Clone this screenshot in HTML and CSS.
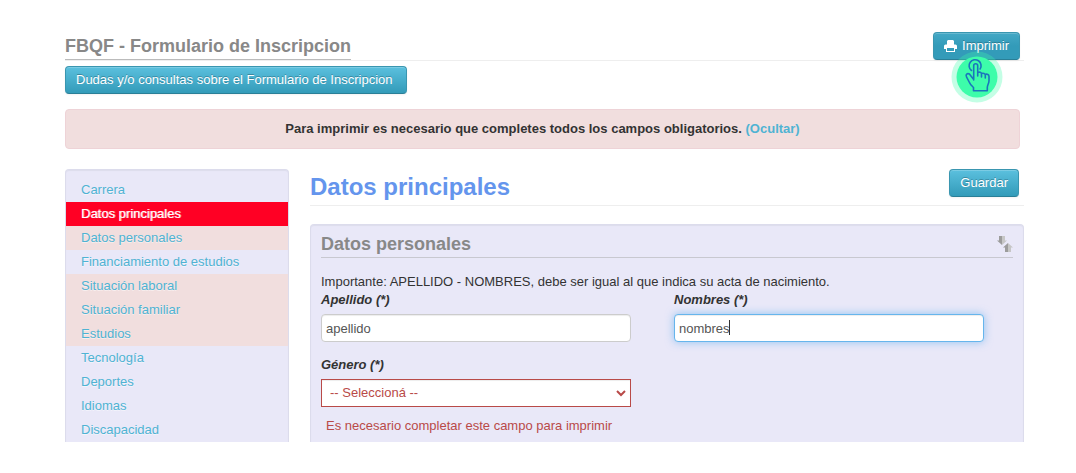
FILE: index.html
```
<!DOCTYPE html>
<html lang="es">
  <head>
    <meta charset="utf-8">
    <title>FBQF - Formulario de Inscripcion</title>
    <link rel="stylesheet" href="styles.css">
  </head>

  <body>
    <div class="container">
      <header class="page-header">
        <h1>FBQF - Formulario de Inscripcion</h1>
        <div class="print">
          <button type="button" class="btn btn-active">
            <svg width="13" height="12" viewBox="0 0 13 12" aria-hidden="true">
              <path fill="#fff" fill-rule="evenodd" d="M4 0h5l1 1v3.500h1.500A1.500 1.500 0 0 1 13 6v3h-2v3H2V9H0V6a1.500 1.500 0 0 1 1.500-1.500H3V1zM3 8v3h7V8z"/>
            </svg>
            Imprimir
          </button>
          <svg class="pointer" width="52" height="52" viewBox="0 0 52 52" aria-hidden="true">
            <circle cx="26" cy="26" r="25.5" fill="#3dfdaa" fill-opacity=".3"/>
            <circle cx="26" cy="26" r="20.5" fill="#3dfdaa"/>
            <g fill="none" stroke="#1b75bc" stroke-width="1.6" stroke-linejoin="round" stroke-linecap="round">
              <path d="M20.500 19.500a6 6 0 1 1 8.600-1.500"/>
              <path d="M22.700 29V14.800a2 2 0 0 1 4 0V25M26.700 21.500c1.800-.8 3.800-.2 3.800 1.500v3M30.500 22.500c1.800-.6 3.800 0 3.800 1.600V27M34.300 23.300c1.900-.6 3.700.2 3.700 2.200v4.200c0 2.800-1.700 4.300-1.700 6.800v3.300H22.500v-3.300c-1.800-1.500-3.400-3-4.300-5.500l-2.700-5.200c-1.200-2.300.8-3.900 2.900-2.800l4.300 5.500"/>
            </g>
          </svg>
        </div>
      </header>

      <button type="button" class="btn btn-help">Dudas y/o consultas sobre el Formulario de Inscripcion</button>

      <div class="alert">
        Para imprimir es necesario que completes todos los campos obligatorios. <a href="#">(Ocultar)</a>
      </div>

      <div class="main">
        <nav class="sidebar">
          <ul>
            <li><a href="#">Carrera</a></li>
            <li class="active"><a href="#">Datos principales</a></li>
            <li class="incomplete"><a href="#">Datos personales</a></li>
            <li><a href="#">Financiamiento de estudios</a></li>
            <li class="incomplete"><a href="#">Situación laboral</a></li>
            <li class="incomplete"><a href="#">Situación familiar</a></li>
            <li class="incomplete"><a href="#">Estudios</a></li>
            <li><a href="#">Tecnología</a></li>
            <li><a href="#">Deportes</a></li>
            <li><a href="#">Idiomas</a></li>
            <li><a href="#">Discapacidad</a></li>
          </ul>
        </nav>

        <form class="content">
          <div class="content-header">
            <h2>Datos principales</h2>
            <button type="button" class="btn">Guardar</button>
          </div>

          <section class="well">
            <div class="legend">
              <h3>Datos personales</h3>
              <svg width="16" height="16" viewBox="0 0 16 16" aria-hidden="true">
                <path fill="#9c9c9c" d="M2 0h3v9L0 4.500h2z"/>
                <path fill="#c6c6c6" d="M5 0h3v4.500h2L5 9z"/>
                <path fill="#9c9c9c" d="M11 7v9H8v-4.500H6z"/>
                <path fill="#c6c6c6" d="M11 7l5 4.500h-2V16h-3z"/>
              </svg>
            </div>
            <p>Importante: APELLIDO - NOMBRES, debe ser igual al que indica su acta de nacimiento.</p>
            <div class="fields">
              <div class="control">
                <label for="apellido">Apellido (*)</label>
                <input type="text" id="apellido" value="apellido">
              </div>
              <div class="control">
                <label for="nombres">Nombres (*)</label>
                <div class="cursor">
                  <input type="text" id="nombres" value="nombres" autofocus>
                </div>
              </div>
              <div class="control error">
                <label for="genero">Género (*)</label>
                <div class="select">
                  <select id="genero">
                    <option>-- Seleccioná --</option>
                    <option>Femenino</option>
                    <option>Masculino</option>
                  </select>
                  <svg width="10" height="7" viewBox="0 0 10 7" aria-hidden="true">
                    <path fill="none" stroke="#b94a48" stroke-width="2" d="M1 1l4 4 4-4"/>
                  </svg>
                </div>
                <span class="help">Es necesario completar este campo para imprimir</span>
              </div>
            </div>
          </section>
        </form>
      </div>
    </div>
  </body>
</html>
```
FILE: styles.css
```
* {
  box-sizing: border-box;
}
body {
  margin: 0;
  background-color: #fff;
  color: #333;
  font-family: "Helvetica Neue", Helvetica, "Liberation Sans", Arial, sans-serif;
  font-size: 13px;
  line-height: 18px;
}
h1, h2, h3, p, ul {
  margin: 0;
  padding: 0;
}
a {
  color: #4fb3d3;
  text-decoration: none;
}
.container {
  padding: 32px 52px 0 65px;
}

/* buttons */
.btn {
  height: 28px;
  padding: 0 10px;
  border: 1px solid #3a96b0;
  border-bottom-color: #2a7f97;
  border-radius: 4px;
  background: linear-gradient(#5bc0de, #339bb9);
  box-shadow: inset 0 1px 0 rgba(255, 255, 255, .2), 0 1px 2px rgba(0, 0, 0, .05);
  color: #fff;
  font: inherit;
  text-shadow: 0 -1px 0 rgba(0, 0, 0, .25);
  cursor: pointer;
}
.btn-active {
  background: linear-gradient(#44a8c5, #339bb9 50%);
}
.btn-help {
  padding-right: 14px;
}

/* header */
.page-header {
  display: flex;
  justify-content: space-between;
  height: 29px;
  margin-bottom: 5px;
  border-bottom: 1px solid #eee;
}
h1 {
  height: 28px;
  border-bottom: 1px solid #bbb;
  color: #888;
  font-size: 18px;
  line-height: 28px;
}
.print {
  position: relative;
  margin-right: 4px;
}
.print .btn {
  display: flex;
  align-items: center;
  gap: 5px;
}
.pointer {
  position: absolute;
  top: 19px;
  left: 18px;
}
.alert {
  margin: 15px 4px 20px 0;
  padding: 10px;
  border: 1px solid #eed3d7;
  border-radius: 4px;
  background-color: #f1dede;
  font-weight: bold;
  text-align: center;
}

/* sections menu */
.main {
  display: grid;
  grid-template-columns: 224px 1fr;
  gap: 21px;
}
.sidebar, .well {
  border: 1px solid #dcdcec;
  border-bottom: 0;
  border-radius: 4px 4px 0 0;
  background-color: #e9e8f8;
  box-shadow: inset 0 1px 1px rgba(0, 0, 0, .05);
}
.sidebar {
  padding-top: 8px;
}
.sidebar ul {
  list-style: none;
}
.sidebar a {
  display: block;
  padding: 3px 15px;
  text-shadow: 0 1px 0 rgba(255, 255, 255, .5);
}
.sidebar .incomplete {
  background-color: #f1dede;
}
.sidebar .active {
  background-color: #ff0024;
}
.sidebar .active a {
  color: #fff;
  text-shadow: 1px 0 0 rgba(255, 255, 255, .6);
}

/* form */
.content {
  display: flex;
  flex-direction: column;
}
.content-header {
  display: flex;
  justify-content: space-between;
  height: 37px;
  padding-right: 5px;
  margin-bottom: 18px;
  border-bottom: 1px solid #eee;
}
h2 {
  color: #6495ed;
  font-size: 24px;
  line-height: 36px;
}
.well {
  flex: 1;
  padding: 5px 10px;
}
.legend {
  display: flex;
  align-items: center;
  justify-content: space-between;
  height: 28px;
  margin-bottom: 15px;
  border-bottom: 1px solid #c8c8d0;
}
h3 {
  color: #888;
  font-size: 18px;
  line-height: 28px;
}
.fields {
  display: grid;
  grid-template-columns: 1fr 1fr;
  gap: 14px 43px;
  padding-right: 29px;
}
.control label {
  display: block;
  margin-bottom: 5px;
  font-weight: bold;
  font-style: italic;
}
.control input, .control select {
  display: block;
  width: 100%;
  height: 28px;
  padding: 4px;
  border: 1px solid #ccc;
  border-radius: 4px;
  background-color: #fff;
  box-shadow: inset 0 1px 1px rgba(0, 0, 0, .075);
  color: #555;
  font: inherit;
}
.control input:focus {
  border-color: #66b5ec;
  outline: 0;
  box-shadow: inset 0 1px 1px rgba(0, 0, 0, .075), 0 0 8px rgba(82, 168, 236, .6);
  caret-color: transparent;
}
.cursor, .select {
  position: relative;
}
.cursor::after {
  content: '';
  position: absolute;
  top: 6px;
  left: 55px;
  width: 1px;
  height: 15px;
  background-color: #333;
}
.select svg {
  position: absolute;
  top: 11px;
  right: 5px;
  pointer-events: none;
}
.error select {
  appearance: none;
  padding: 4px 8px;
  border-color: #b94a48;
  border-radius: 0;
  color: #b94a48;
}
.help {
  display: block;
  margin-top: 10px;
  padding-left: 5px;
  color: #b94a48;
}
```
